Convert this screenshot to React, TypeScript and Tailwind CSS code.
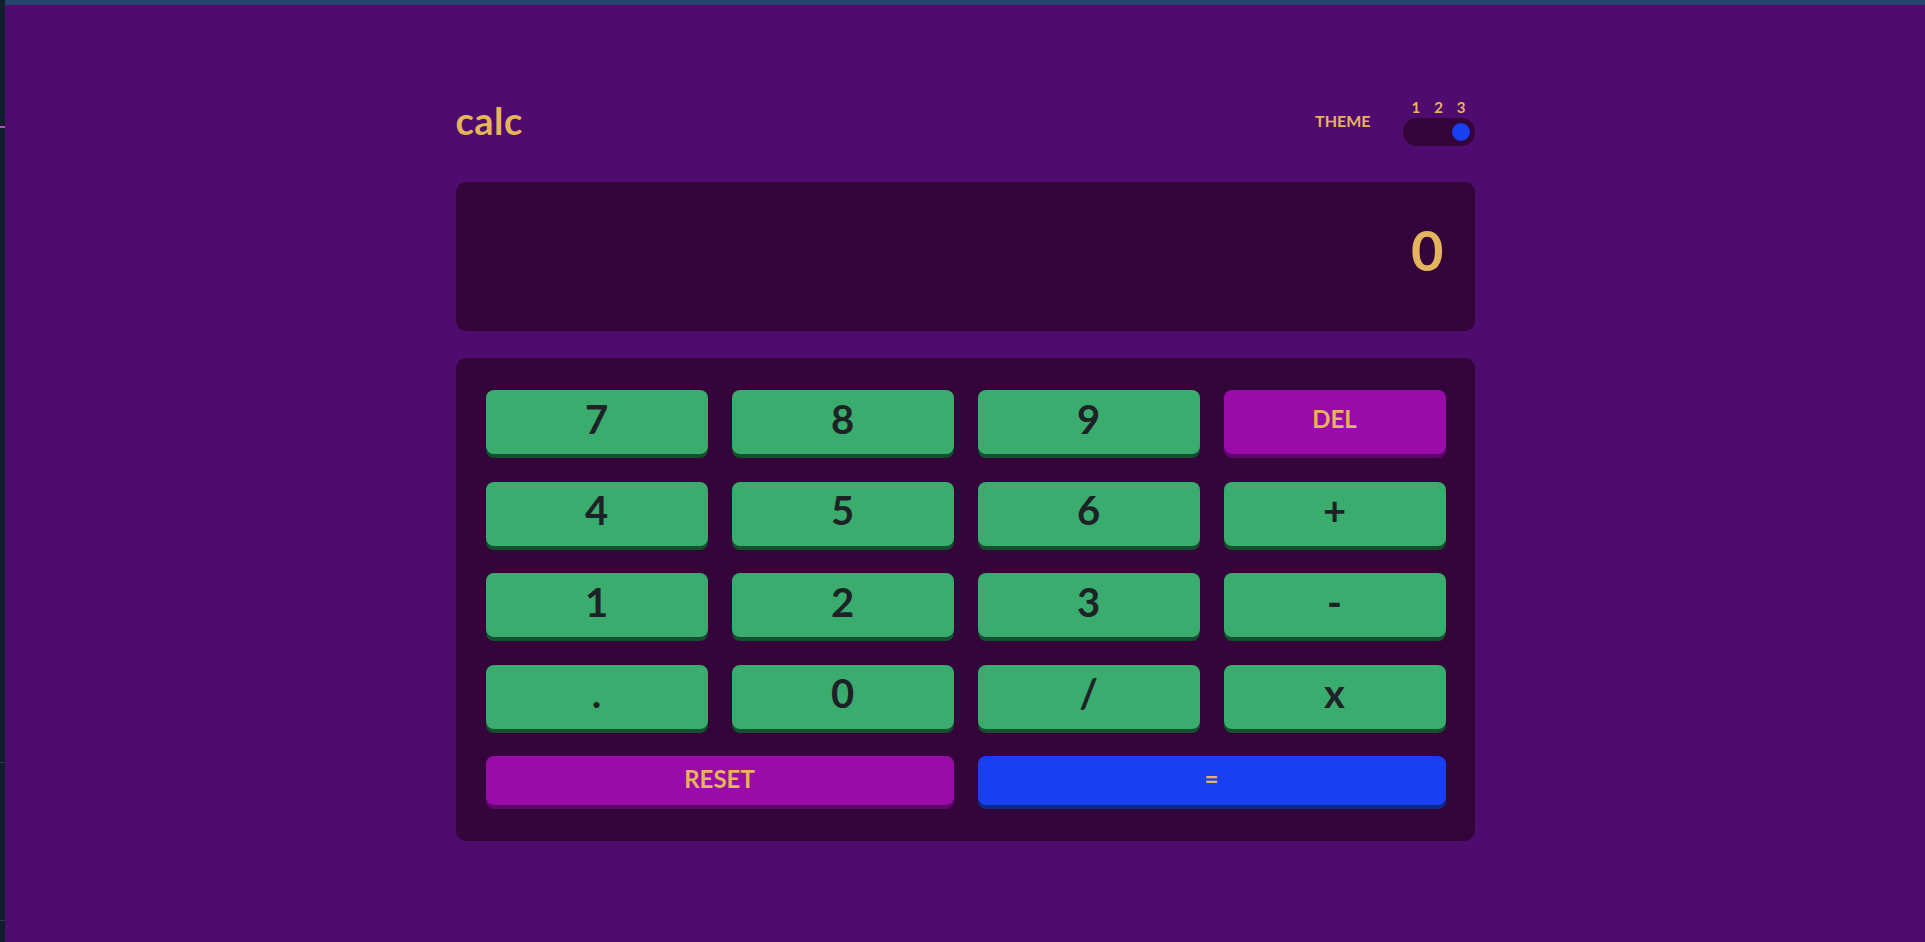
import React from 'react';

type Key = {
  label: string;
  kind?: 'num' | 'del' | 'reset' | 'eq';
};

const keys: Key[] = [
  { label: '7' },
  { label: '8' },
  { label: '9' },
  { label: 'DEL', kind: 'del' },
  { label: '4' },
  { label: '5' },
  { label: '6' },
  { label: '+' },
  { label: '1' },
  { label: '2' },
  { label: '3' },
  { label: '-' },
  { label: '.' },
  { label: '0' },
  { label: '/' },
  { label: 'x' },
];

const CalcKey: React.FC<{ k: Key }> = ({ k }) => {
  if (k.kind === 'del') {
    return (
      <button className="h-[64px] rounded-[8px] bg-[#9a0ba9] shadow-[0_4px_0_#5c0769] text-[24px] font-bold text-[#e4b55a] flex items-center justify-center pb-[6px]">
        {k.label}
      </button>
    );
  }
  return (
    <button className="h-[64px] rounded-[8px] bg-[#3aac6d] shadow-[0_4px_0_#14502d] text-[40px] font-bold text-[#1d2227] flex items-center justify-center pb-[7px]">
      {k.label}
    </button>
  );
};

const App: React.FC = () => {
  return (
    <div className="flex h-screen w-full overflow-hidden bg-[#4f0c6e] font-['Lato','Liberation_Sans',sans-serif]">
      {/* editor edge strip */}
      <div className="w-[5px] shrink-0 bg-[#0f1f2b] flex flex-col">
        <div className="h-[126px]" />
        <div className="h-[2px] bg-[#b84cc0]" />
        <div className="h-[634px]" />
        <div className="h-[1px] bg-[#26405a]" />
        <div className="h-[157px]" />
        <div className="h-[1px] bg-[#26405a]" />
      </div>

      <div className="flex-1 flex flex-col">
        <div className="h-[5px] bg-[#26456c]" />

        <div className="w-[1019px] mx-auto pt-[95px]">
          {/* header */}
          <div className="flex items-end justify-between h-[46px]">
            <h1 className="text-[38px] leading-none font-bold tracking-[0.5px] text-[#e4b55a] mb-[7px]">calc</h1>
            <div className="flex items-end gap-[32px]">
              <span className="text-[16px] leading-none font-bold text-[#e4b55a] mb-[17px]">THEME</span>
              <div className="flex flex-col">
                <div className="flex justify-between px-[9px] text-[15px] leading-none font-bold text-[#e4b55a] mb-[3px]">
                  <span>1</span>
                  <span>2</span>
                  <span>3</span>
                </div>
                <div className="w-[72px] h-[28px] rounded-full bg-[#34053a] flex items-center justify-end px-[5px]">
                  <div className="w-[18px] h-[18px] rounded-full bg-[#1940f0]" />
                </div>
              </div>
            </div>
          </div>

          {/* display */}
          <div className="mt-[36px] h-[149px] rounded-[10px] bg-[#34053a] flex items-center justify-end px-[31px] pb-[13px]">
            <span className="text-[56px] leading-none font-bold text-[#e4b55a]">0</span>
          </div>

          {/* keypad */}
          <div className="mt-[27px] rounded-[10px] bg-[#34053a] pt-[32px] pb-[36px] pl-[30px] pr-[29px]">
            <div className="grid grid-cols-4 gap-x-[24px] gap-y-[27.5px]">
              {keys.map((k, i) => (
                <CalcKey key={i} k={k} />
              ))}
              <button className="col-span-2 h-[49px] rounded-[8px] bg-[#9a0ba9] shadow-[0_4px_0_#5c0769] text-[24px] font-bold text-[#e4b55a] flex items-center justify-center pb-[4px]">
                RESET
              </button>
              <button className="col-span-2 h-[49px] rounded-[8px] bg-[#1940f0] shadow-[0_4px_0_#0c2a8c] text-[24px] font-bold text-[#e4b55a] flex items-center justify-center pb-[4px]">
                =
              </button>
            </div>
          </div>
        </div>
      </div>
    </div>
  );
};

export default App;
